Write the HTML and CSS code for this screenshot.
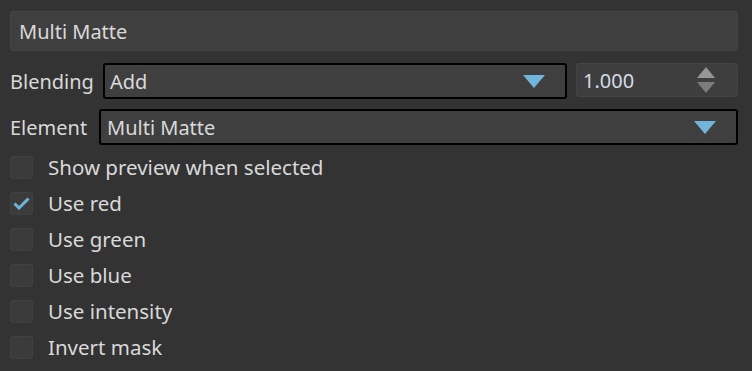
FILE: index.html
```html
<!DOCTYPE html>
<html lang="en">
<head>
  <meta charset="UTF-8">
  <title>Multi Matte</title>
  <link rel="stylesheet" href="styles.css">
</head>
<body>
  <div class="panel">
    <div class="name-field">Multi Matte</div>

    <div class="row">
      <span class="label">Blending</span>
      <div class="combo blend">
        <span>Add</span>
        <svg class="arrow" width="22" height="13" viewBox="0 0 22 13"><polygon points="0,0 22,0 11,13" fill="#71b6da"/></svg>
      </div>
      <div class="spin">
        <span>1.000</span>
        <div class="spin-arrows">
          <svg width="18" height="11" viewBox="0 0 18 11"><polygon points="9,0 18,11 0,11" fill="#969696"/></svg>
          <svg width="18" height="11" viewBox="0 0 18 11"><polygon points="0,0 18,0 9,11" fill="#7c7c7c"/></svg>
        </div>
      </div>
    </div>

    <div class="row">
      <span class="label">Element</span>
      <div class="combo element">
        <span>Multi Matte</span>
        <svg class="arrow" width="22" height="13" viewBox="0 0 22 13"><polygon points="0,0 22,0 11,13" fill="#71b6da"/></svg>
      </div>
    </div>

    <div class="checks">
      <div class="check"><span class="box"></span>Show preview when selected</div>
      <div class="check"><span class="box">
        <svg width="17" height="13" viewBox="0 0 17 13"><polyline points="1.5,6.5 6,11 15.5,1.5" fill="none" stroke="#6db4dc" stroke-width="3"/></svg>
      </span>Use red</div>
      <div class="check"><span class="box"></span>Use green</div>
      <div class="check"><span class="box"></span>Use blue</div>
      <div class="check"><span class="box"></span>Use intensity</div>
      <div class="check"><span class="box"></span>Invert mask</div>
    </div>
  </div>
</body>
</html>
```

FILE: styles.css
```css
body {
  margin: 0;
  background-color: #333333;
  color: #d9d9d9;
  font-family: "Noto Sans", "DejaVu Sans", sans-serif;
  font-size: 20px;
}
.panel {
  padding: 11px 14px 0 10px;
}
.name-field {
  height: 40px;
  box-sizing: border-box;
  padding-left: 8px;
  display: flex;
  align-items: center;
  background-color: #3f3f3f;
  border: 1px solid #444444;
  border-radius: 3px;
}
.row {
  display: flex;
  align-items: center;
  margin-top: 12px;
  height: 36px;
}
.row + .row {
  margin-top: 10px;
}
.label {
  width: 93px;
  flex: none;
}
.row .label + .element {
  margin-left: -4px;
}
.combo {
  height: 36px;
  box-sizing: border-box;
  border: 2px solid #000;
  border-radius: 3px;
  background-color: #3f3f3f;
  display: flex;
  align-items: center;
  justify-content: space-between;
  padding: 0 20px 0 5px;
}
.combo.blend {
  width: 464px;
}
.combo.element {
  flex: 1;
  padding-left: 6px;
}
.spin {
  margin-left: 9px;
  flex: 1;
  height: 34px;
  align-self: flex-start;
  box-sizing: border-box;
  background-color: #3e3e3e;
  border: 1px solid #444444;
  border-radius: 3px;
  display: flex;
  align-items: center;
  justify-content: space-between;
  padding: 0 22px 0 6px;
  color: #d4dce4;
}
.spin-arrows {
  display: flex;
  flex-direction: column;
  gap: 4px;
}
.spin-arrows svg {
  display: block;
}
.checks {
  margin-top: 4px;
}
.check {
  height: 36px;
  display: flex;
  align-items: center;
  font-size: 20.5px;
}
.box {
  width: 23px;
  height: 23px;
  box-sizing: border-box;
  margin-right: 15px;
  background-color: #3b3b3b;
  border: 1px solid #414141;
  border-radius: 3px;
  display: flex;
  align-items: center;
  justify-content: center;
}
.box svg {
  display: block;
  margin-top: 1px;
}
```
